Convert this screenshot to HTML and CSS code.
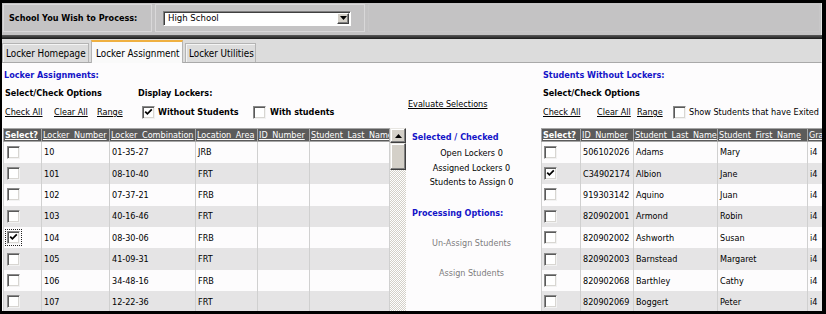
FILE: index.html
```html
<!DOCTYPE html>
<html>
<head>
<meta charset="utf-8">
<title>Locker Assignment</title>
<link rel="stylesheet" href="styles.css">
</head>
<body>
<div class="frame">
  <div class="toolbar">
    <div class="tcell tlabel">School You Wish to Process:</div>
    <div class="tcell tsel">
      <div class="select">
        <span class="sval">High School</span>
        <span class="sbtn"><svg width="7" height="4" viewBox="0 0 7 4"><path d="M0 0H7L3.5 4Z" fill="#000"/></svg></span>
      </div>
    </div>
    <div class="tcell trest"></div>
  </div>
  <div class="sep"></div>
  <div class="tabs">
    <div class="tab">Locker Homepage</div>
    <div class="tab active">Locker Assignment</div>
    <div class="tab">Locker Utilities</div>
  </div>
  <div class="content">
    <section class="left">
      <h2 class="title">Locker Assignments:</h2>
      <div class="opts">
        <div class="colA">
          <div class="oh">Select/Check Options</div>
          <div class="links">
            <span class="lk lk-a1"><u>Check All</u></span>
            <span class="lk lk-a2"><u>Clear All</u></span>
            <span class="lk"><u>Range</u></span>
          </div>
        </div>
        <div class="colB">
          <div class="oh">Display Lockers:</div>
          <div class="links">
            <span class="cb on"><svg width="9" height="9" viewBox="0 0 9 9"><path d="M1.2 3.6L3.4 5.9L7.8 1.4" fill="none" stroke="#000" stroke-width="1.7"/></svg></span>
            <span class="cbtxt cbtxt-w">Without Students</span>
            <span class="cb"></span>
            <span class="cbtxt cbtxt-s">With students</span>
          </div>
        </div>
      </div>
      <div class="tablewrap">
        <table class="grid lgrid">
          <colgroup><col class="c38"><col class="c68"><col class="c86"><col class="c62"><col class="c52"><col class="c80"></colgroup>
          <thead>
            <tr><th class="selh">Select?</th><th>Locker Number</th><th>Locker Combination</th><th>Location Area</th><th>ID Number</th><th>Student Last Name</th></tr>
          </thead>
          <tbody>
            <tr><td class="ck"><span class="cb"></span></td><td>10</td><td>01-35-27</td><td>JRB</td><td></td><td></td></tr>
            <tr><td class="ck"><span class="cb"></span></td><td>101</td><td>08-10-40</td><td>FRT</td><td></td><td></td></tr>
            <tr><td class="ck"><span class="cb"></span></td><td>102</td><td>07-37-21</td><td>FRB</td><td></td><td></td></tr>
            <tr><td class="ck"><span class="cb"></span></td><td>103</td><td>40-16-46</td><td>FRT</td><td></td><td></td></tr>
            <tr><td class="ck"><span class="cb on focus"><svg width="9" height="9" viewBox="0 0 9 9"><path d="M1.2 3.6L3.4 5.9L7.8 1.4" fill="none" stroke="#000" stroke-width="1.7"/></svg></span></td><td>104</td><td>08-30-06</td><td>FRB</td><td></td><td></td></tr>
            <tr><td class="ck"><span class="cb"></span></td><td>105</td><td>41-09-31</td><td>FRT</td><td></td><td></td></tr>
            <tr><td class="ck"><span class="cb"></span></td><td>106</td><td>34-48-16</td><td>FRB</td><td></td><td></td></tr>
            <tr><td class="ck"><span class="cb"></span></td><td>107</td><td>12-22-36</td><td>FRT</td><td></td><td></td></tr>
          </tbody>
        </table>
        <div class="vscroll">
          <div class="sb-btn"><svg width="7" height="4" viewBox="0 0 7 4"><path d="M3.5 0L7 4H0Z" fill="#000"/></svg></div>
          <div class="sb-thumb"></div>
          <div class="sb-track"></div>
        </div>
      </div>
    </section>

    <section class="mid">
      <div class="eval"><u>Evaluate Selections</u></div>
      <h3 class="mtitle mt-sel">Selected / Checked</h3>
      <div class="stats">
        <div>Open Lockers 0</div>
        <div>Assigned Lockers 0</div>
        <div>Students to Assign 0</div>
      </div>
      <h3 class="mtitle mt-proc">Processing Options:</h3>
      <div class="action act-un">Un-Assign Students</div>
      <div class="action act-as">Assign Students</div>
    </section>

    <section class="right">
      <h2 class="title">Students Without Lockers:</h2>
      <div class="opts">
        <div class="colA">
          <div class="oh">Select/Check Options</div>
          <div class="links">
            <span class="lk lk-b1"><u>Check All</u></span>
            <span class="lk lk-b2"><u>Clear All</u></span>
            <span class="lk lk-b3"><u>Range</u></span>
            <span class="cb"></span>
            <span class="cbtxt cbtxt-r">Show Students that have Exited</span>
          </div>
        </div>
      </div>
      <div class="tablewrap">
        <table class="grid rgrid">
          <colgroup><col class="c39"><col class="c53"><col class="c84"><col class="c90"><col class="c40"></colgroup>
          <thead>
            <tr><th class="selh">Select?</th><th>ID Number</th><th>Student Last Name</th><th>Student First Name</th><th>Grade</th></tr>
          </thead>
          <tbody>
            <tr><td class="ck"><span class="cb"></span></td><td>506102026</td><td>Adams</td><td>Mary</td><td>i4</td></tr>
            <tr><td class="ck"><span class="cb on"><svg width="9" height="9" viewBox="0 0 9 9"><path d="M1.2 3.6L3.4 5.9L7.8 1.4" fill="none" stroke="#000" stroke-width="1.7"/></svg></span></td><td>C34902174</td><td>Albion</td><td>Jane</td><td>i4</td></tr>
            <tr><td class="ck"><span class="cb"></span></td><td>919303142</td><td>Aquino</td><td>Juan</td><td>i4</td></tr>
            <tr><td class="ck"><span class="cb"></span></td><td>820902001</td><td>Armond</td><td>Robin</td><td>i4</td></tr>
            <tr><td class="ck"><span class="cb"></span></td><td>820902002</td><td>Ashworth</td><td>Susan</td><td>i4</td></tr>
            <tr><td class="ck"><span class="cb"></span></td><td>820902003</td><td>Barnstead</td><td>Margaret</td><td>i4</td></tr>
            <tr><td class="ck"><span class="cb"></span></td><td>820902068</td><td>Barthley</td><td>Cathy</td><td>i4</td></tr>
            <tr><td class="ck"><span class="cb"></span></td><td>820902069</td><td>Boggert</td><td>Peter</td><td>i4</td></tr>
          </tbody>
        </table>
      </div>
    </section>
  </div>
</div>
</body>
</html>
```

FILE: styles.css
```css
* { box-sizing: border-box; margin: 0; padding: 0; }
html, body { width: 826px; height: 314px; overflow: hidden; background: #000; }
body {
  font-family: "DejaVu Sans Condensed", "DejaVu Sans", sans-serif;
  font-size: 9px;
  color: #000;
}
u { text-decoration: underline; }

.frame {
  width: 826px;
  height: 314px;
  border-style: solid;
  border-color: #000;
  border-width: 3px 4px 3px 2px;
  background: #fdfcfd;
  display: flex;
  flex-direction: column;
  overflow: hidden;
}

/* toolbar */
.toolbar {
  height: 32px;
  flex: none;
  background: #c4c3c4;
  display: flex;
  align-items: flex-start;
  gap: 3px;
  padding: 1px 1px 0 1px;
  border-right: 1px solid #e2e2e2;
}
.tcell {
  height: 28px;
  border: 1px solid #d9d8d9;
  display: flex;
  align-items: center;
}
.tlabel {
  width: 149px;
  padding-left: 5px;
  font-weight: bold;
  font-size: 9px;
  white-space: nowrap;
}
.tsel { width: 210px; padding-left: 7px; }
.trest { flex: 1; border-color: #c8c7c8; }
.select {
  width: 188px;
  height: 15px;
  background: #fff;
  border: 1px solid;
  border-color: #808080 #ffffff #ffffff #808080;
  box-shadow: inset 1px 1px 0 #404040;
  display: flex;
  align-items: center;
  justify-content: space-between;
  padding: 0 1px 0 4px;
}
.sval { font-size: 9.5px; line-height: 12px; }
.sbtn {
  width: 12px;
  height: 11px;
  background: #d4d0c8;
  border: 1px solid;
  border-color: #ffffff #404040 #404040 #ffffff;
  box-shadow: inset -1px -1px 0 #808080;
  display: flex;
  align-items: center;
  justify-content: center;
}

.sep {
  height: 4px;
  flex: none;
  background: linear-gradient(#5a5a5a, #1a1a1a);
}

/* tabs */
.tabs {
  height: 24px;
  flex: none;
  background: #dcdcdc;
  border-bottom: 1px solid #a9a9a9;
  border-right: 1px solid #f0f0f0;
  display: flex;
  align-items: flex-end;
  gap: 2px;
}
.tab {
  height: 19px;
  padding: 0 3px;
  border: 1px solid #b4b4b4;
  border-bottom: none;
  box-shadow: inset 1px 1px 0 #f4f4f4;
  display: flex;
  align-items: center;
  white-space: nowrap;
  font-size: 9.8px;
  overflow: hidden;
}
.tab:nth-child(1) { width: 87px; }
.tab:nth-child(3) { width: 71px; }
.tab.active {
  width: 92px;
  height: 23px;
  background: #fafafa;
  border-top: 2px solid #efb040;
  padding: 2px 0 0 4px;
  box-shadow: none;
  margin-bottom: -1px;
}

/* content */
.content {
  flex: 1;
  display: flex;
  min-height: 0;
}
.left { width: 403px; flex: none; display: flex; flex-direction: column; padding-top: 6px; }
.mid { width: 133px; flex: none; display: flex; flex-direction: column; }
.right { flex: 1; min-width: 0; display: flex; flex-direction: column; padding-top: 6px; overflow: hidden; }

.title {
  font-size: 9px;
  font-weight: bold;
  color: #1414c8;
  line-height: 12px;
  height: 12px;
  white-space: nowrap;
}
.left .title { padding-left: 2px; }
.right .title { padding-left: 5px; }

.opts { display: flex; margin-top: 6px; }
.left .colA { width: 136px; padding-left: 3px; }
.right .colA { padding-left: 5px; }
.oh { font-weight: bold; line-height: 12px; height: 12px; white-space: nowrap; }
.links {
  display: flex;
  align-items: center;
  height: 14px;
  margin-top: 6px;
  white-space: nowrap;
}
.colB .links { padding-left: 4px; }
.lk { display: inline-block; line-height: 12px; }
.lk-a1 { width: 49px; }
.lk-a2 { width: 43px; }
.lk-b1 { width: 54px; }
.lk-b2 { width: 40px; }
.lk-b3 { width: 36px; }

.cbtxt { line-height: 12px; }
.cbtxt-w { font-weight: bold; margin-left: 3px; width: 95px; }
.cbtxt-s { font-weight: bold; margin-left: 4px; }
.cbtxt-r { margin-left: 3px; }

/* checkbox */
.cb {
  width: 13px;
  height: 13px;
  flex: none;
  display: inline-flex;
  align-items: center;
  justify-content: center;
  background: #fff;
  border: 1px solid;
  border-color: #8a8a8a #f2f2f2 #f2f2f2 #8a8a8a;
  box-shadow: inset 1px 1px 0 #5a5a5a, inset -1px -1px 0 #d8d6d2;
}
.cb.focus { outline: 1px dotted #222; outline-offset: 1px; }

/* tables */
.tablewrap { display: flex; margin-top: 9px; flex: 1; min-height: 0; }
.left .tablewrap { padding-left: 1px; }
.right .tablewrap { padding-left: 3px; }
.grid {
  border-collapse: collapse;
  table-layout: fixed;
  align-self: flex-start;
}
.lgrid { width: 386px; }
.rgrid { width: 306px; }
.c38 { width: 38px; } .c68 { width: 68px; } .c86 { width: 86px; } .c62 { width: 62px; }
.c52 { width: 52px; } .c80 { width: 80px; }
.c39 { width: 39px; } .c53 { width: 53px; } .c84 { width: 84px; } .c90 { width: 90px; } .c40 { width: 40px; }

.grid th {
  height: 13px;
  background: #5b5b5b;
  color: #fff;
  font-weight: normal;
  text-decoration: underline;
  text-align: left;
  padding: 0 1px;
  border: 1px solid #a6a6a6;
  white-space: nowrap;
  overflow: hidden;
  line-height: 11px;
  word-spacing: 2px;
}
.grid th.selh { font-weight: bold; word-spacing: 0; }
.grid td {
  height: 21.4px;
  padding: 0 2px;
  border-left: 1px solid #d0d0d0;
  border-right: 1px solid #d0d0d0;
  white-space: nowrap;
  overflow: hidden;
  vertical-align: middle;
}
.grid tbody tr:nth-child(even) td { background: #e5e4e5; }
.lgrid td.ck { padding-left: 3px; }
.rgrid td.ck { padding-left: 2px; }
.grid td.ck .cb { vertical-align: middle; }

/* scrollbar */
.vscroll { width: 16px; flex: none; display: flex; flex-direction: column; }
.sb-btn, .sb-thumb {
  background: #d4d0c8;
  border: 1px solid;
  border-color: #e8e6e2 #404040 #404040 #e8e6e2;
  box-shadow: inset -1px -1px 0 #808080, inset 1px 1px 0 #ffffff;
}
.sb-btn { height: 15px; display: flex; align-items: center; justify-content: center; }
.sb-thumb { height: 27px; }
.sb-track {
  flex: 1;
  background-color: #fff;
  background-image: repeating-conic-gradient(#d4d0c8 0 25%, #ffffff 0 50%);
  background-size: 2px 2px;
}

/* middle */
.eval { margin-top: 35px; padding-left: 3px; line-height: 12px; white-space: nowrap; }
.mtitle {
  font-size: 9px;
  font-weight: bold;
  color: #1414c8;
  line-height: 12px;
  padding-left: 7px;
  white-space: nowrap;
}
.mt-sel { margin-top: 21px; }
.stats { margin-top: 3px; text-align: center; line-height: 14.5px; }
.mt-proc { margin-top: 17px; }
.action { color: #7d7d7d; text-align: center; line-height: 12px; }
.act-un { margin-top: 18px; }
.act-as { margin-top: 18px; }
```
